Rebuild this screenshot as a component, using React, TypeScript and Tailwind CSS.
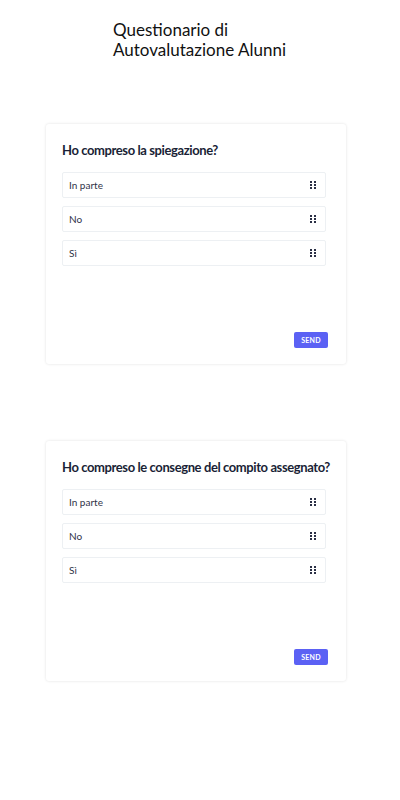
const options = ["In parte", "No", "Sì"]

function DragHandle() {
  return (
    <svg width="6" height="8" viewBox="0 0 6 8" className="text-[#2a2f45]">
      <rect x="0" y="0" width="2" height="2" fill="currentColor" />
      <rect x="4" y="0" width="2" height="2" fill="currentColor" />
      <rect x="0" y="3" width="2" height="2" fill="currentColor" />
      <rect x="4" y="3" width="2" height="2" fill="currentColor" />
      <rect x="0" y="6" width="2" height="2" fill="currentColor" />
      <rect x="4" y="6" width="2" height="2" fill="currentColor" />
    </svg>
  )
}

function QuestionCard({ question }: { question: string }) {
  return (
    <div className="ml-[46px] w-[300px] rounded-[3px] bg-white pl-4 pr-5 pt-[17px] pb-4 shadow-[0_0_3px_rgba(0,0,0,0.12)]">
      <h2 className="whitespace-nowrap text-[13px] font-bold leading-[18px] tracking-[-0.4px] text-[#1a1f36]">
        {question}
      </h2>
      <div className="mt-[13px] flex flex-col gap-2">
        {options.map((opt) => (
          <div
            key={opt}
            className="flex h-[26px] items-center justify-between rounded-[2px] border border-[#edf0f3] pl-[6px] pr-[9px]"
          >
            <span className="text-[10px] text-[#2f3448]">{opt}</span>
            <DragHandle />
          </div>
        ))}
      </div>
      <div className="mt-[66px] -mr-[2px] flex justify-end">
        <button className="h-4 w-[34px] rounded-[2px] bg-[#5b61f4] text-[7px] font-bold tracking-wide text-white">
          SEND
        </button>
      </div>
    </div>
  )
}

export default function App() {
  return (
    <div className="min-h-[800px] bg-white pt-5 font-['Lato','Noto_Sans',sans-serif]">
      <h1 className="pl-[113px] text-[17px] leading-5 font-normal text-[#111]">
        Questionario di
        <br />
        Autovalutazione Alunni
      </h1>
      <div className="mt-16">
        <QuestionCard question="Ho compreso la spiegazione?" />
      </div>
      <div className="mt-[77px]">
        <QuestionCard question="Ho compreso le consegne del compito assegnato?" />
      </div>
    </div>
  )
}
